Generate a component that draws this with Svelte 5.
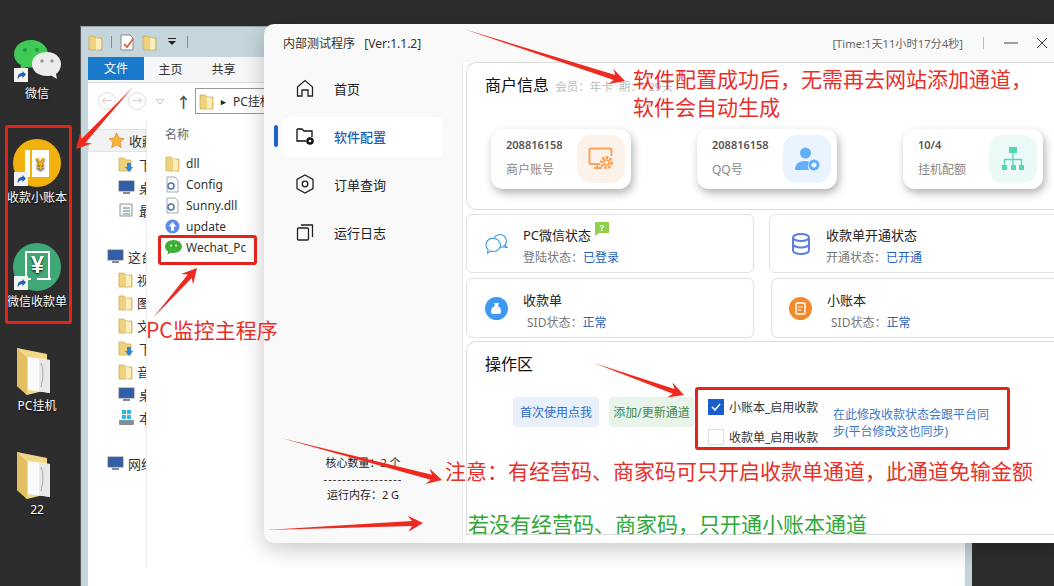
<script>
	const desktop = [
		{ name: '微信', kind: 'wechat' },
		{ name: '收款小账本', kind: 'ledger' },
		{ name: '微信收款单', kind: 'receipt' },
		{ name: 'PC挂机', kind: 'folder' },
		{ name: '22', kind: 'folder' }
	];
	const tree = [
		{ t: '收藏夹', top: true, sel: true, kind: 'star' },
		{ t: '下载', kind: 'dl' },
		{ t: '桌面', kind: 'desk' },
		{ t: '最近', kind: 'recent' },
		{ t: '这台电脑', top: true, gap: true, kind: 'pc' },
		{ t: '视频', kind: 'folder' },
		{ t: '图片', kind: 'folder' },
		{ t: '文档', kind: 'folder' },
		{ t: '下载', kind: 'dl' },
		{ t: '音乐', kind: 'folder' },
		{ t: '桌面', kind: 'desk' },
		{ t: '本地磁盘', kind: 'disk' },
		{ t: '网络', top: true, gap: true, kind: 'pc' }
	];
	const files = [
		{ n: 'dll', kind: 'folder' },
		{ n: 'Config', kind: 'config' },
		{ n: 'Sunny.dll', kind: 'dllf' },
		{ n: 'update', kind: 'update' },
		{ n: 'Wechat_Pc', kind: 'wx' }
	];
	const nav = [
		{ t: '首页', icon: 'home' },
		{ t: '软件配置', icon: 'cfg', active: true },
		{ t: '订单查询', icon: 'hex' },
		{ t: '运行日志', icon: 'copy' }
	];
	const stats = [
		{ v: '208816158', l: '商户账号', c: 'orange' },
		{ v: '208816158', l: 'QQ号', c: 'blue' },
		{ v: '10/4', l: '挂机配额', c: 'teal' }
	];
	// 标注箭头: 尾部 -> 箭尖
	const arrows = [
		[464, 29, 625, 81],
		[133, 87, 76, 149],
		[153, 318, 197, 268],
		[594, 363, 684, 395],
		[281, 438, 442, 480],
		[266, 530, 423, 523]
	];
	function arrowPts([x1, y1, x2, y2]) {
		const len = Math.hypot(x2 - x1, y2 - y1);
		const ux = (x2 - x1) / len, uy = (y2 - y1) / len;
		const nx = -uy, ny = ux;
		const hb = 15, hw = 8, sw = 2.6;
		const bx = x2 - ux * hb, by = y2 - uy * hb;
		const nb = x2 - ux * (hb - 4), mb = y2 - uy * (hb - 4);
		return [
			[x1, y1],
			[nb + nx * sw, mb + ny * sw],
			[bx + nx * hw, by + ny * hw],
			[x2, y2],
			[bx - nx * hw, by - ny * hw],
			[nb - nx * sw, mb - ny * sw]
		].map(p => p.map(v => v.toFixed(1)).join(',')).join(' ');
	}
</script>

{#snippet miniFolder()}
	<svg width="15" height="17" viewBox="0 0 15 17"><path d="M1 2h5l2 2h6v12H1z" fill="#efd27e" stroke="#c9a64f" stroke-width=".7"/><path d="M8 4l5 1v10l-5 1z" fill="#fbeebc"/></svg>
{/snippet}

{#snippet shortcut()}
	<svg class="sc" width="14" height="14" viewBox="0 0 14 14"><rect width="14" height="14" fill="#f2f2f2"/><path d="M3.500 11c0-4 2-6 5-6V3l3.500 3.500L8.500 10V8c-2 0-3.500 1-5 3z" fill="#1c62b9"/></svg>
{/snippet}

{#snippet deskIcon(kind)}
	{#if kind === 'wechat'}
		<svg width="48" height="48" viewBox="0 0 48 48"><g transform="translate(0 3)">
			<path d="M18 2C8 2 1 8.500 1 16c0 5 3 9 7 11l-1 6 6-4c2 .5 4 .5 6 .5C29 29.500 35 23 35 16S28 2 18 2z" fill="#3fc957"/>
			<circle cx="12" cy="12" r="2" fill="#1f9c37"/><circle cx="24" cy="12" r="2" fill="#1f9c37"/>
			<path d="M34 14c-9 0-15 5-15 12s6 12 15 12c2 0 3 0 4-.5l6 3.500-1-5c3-2 5-6 5-10 0-7-6-12-14-12z" fill="#ececec"/>
			<circle cx="29" cy="23" r="1.800" fill="#999"/><circle cx="39" cy="23" r="1.800" fill="#999"/>
		</g></svg>
	{:else if kind === 'ledger'}
		<svg width="48" height="48" viewBox="0 0 48 48">
			<circle cx="24" cy="24" r="24" fill="#f2b10c"/>
			<rect x="12" y="11" width="5" height="27" fill="#fff"/>
			<rect x="19" y="11" width="17" height="27" fill="#fff"/>
			<text x="27.500" y="31" text-anchor="middle" font-size="16" font-weight="700" fill="#f2b10c" font-family="Liberation Sans, sans-serif">¥</text>
		</svg>
	{:else if kind === 'receipt'}
		<svg width="48" height="48" viewBox="0 0 48 48">
			<circle cx="24" cy="24" r="24" fill="#3fa876"/>
			<path d="M13 36V9h23v27" fill="none" stroke="#fff" stroke-width="2"/>
			<text x="24.500" y="30" text-anchor="middle" font-size="23" font-weight="700" fill="#fff" font-family="Liberation Sans, sans-serif">¥</text>
			<path d="M8 36h10M24 36h14" stroke="#fff" stroke-width="2"/>
		</svg>
	{:else}
		<svg width="48" height="52" viewBox="0 0 48 52">
			<path d="M4 1l30 6v36L14 48 4 39z" fill="#f2d98a"/>
			<path d="M4 1v38l10 9V11z" fill="#e3bf62"/>
			<path d="M15 10l22 3v33l-22-3z" fill="#fafafa"/>
			<path d="M26 12l11 1v33l-11-2z" fill="#e8e8e8"/>
			<path d="M28 16q4 8 0 24" stroke="#999" fill="none" stroke-width=".8"/>
		</svg>
	{/if}
{/snippet}

{#snippet treeIcon(kind)}
	{#if kind === 'star'}
		<svg width="17" height="17" viewBox="0 0 17 17"><path d="M8.500 1l2.300 5 5.200.6-3.900 3.500 1.100 5.400-4.700-2.800-4.700 2.800 1.100-5.400L1 6.600 6.200 6z" fill="#f7b733" stroke="#d5802b" stroke-width=".7"/></svg>
	{:else if kind === 'pc' || kind === 'desk'}
		<svg width="17" height="17" viewBox="0 0 17 17"><rect x="1" y="2" width="15" height="10" fill="#2f5fa8" stroke="#667" stroke-width=".8"/><rect x="5" y="13" width="7" height="2" fill="#889"/></svg>
	{:else if kind === 'disk'}
		<svg width="17" height="17" viewBox="0 0 17 17"><rect x="4" y="1" width="4" height="4" fill="#28b5e8"/><rect x="9" y="1" width="4" height="4" fill="#28b5e8"/><rect x="4" y="6" width="4" height="4" fill="#28b5e8"/><rect x="9" y="6" width="4" height="4" fill="#28b5e8"/><rect x="1" y="11" width="15" height="5" rx="1" fill="#7f9191"/></svg>
	{:else if kind === 'recent'}
		<svg width="17" height="17" viewBox="0 0 17 17"><rect x="2" y="2" width="12" height="12" fill="#f4f4f4" stroke="#8a9aa0"/><path d="M5 6h7M5 9h7M5 12h7" stroke="#6d8a96"/></svg>
	{:else if kind === 'dl'}
		<svg width="17" height="17" viewBox="0 0 17 17"><path d="M1 2h5l2 2h5v11H1z" fill="#efd27e" stroke="#c9a64f" stroke-width=".7"/><path d="M9 7h4v4h2l-4 5-4-5h2z" fill="#2a86d8"/></svg>
	{:else}
		{@render miniFolder()}
	{/if}
{/snippet}

{#snippet fileIcon(kind)}
	{#if kind === 'folder'}
		{@render miniFolder()}
	{:else if kind === 'config' || kind === 'dllf'}
		<svg width="15" height="17" viewBox="0 0 15 17"><path d="M2 1h8l3 3v12H2z" fill="#fbfbfb" stroke="#8d9aa5" stroke-width=".8"/><circle cx="6" cy="10" r="3" fill="none" stroke="#5677a6" stroke-width="1.500"/></svg>
	{:else if kind === 'update'}
		<svg width="15" height="15" viewBox="0 0 15 15"><circle cx="7.500" cy="7.500" r="7" fill="#5a8cf0"/><path d="M7.500 3l4 4.500H9V12H6V7.500H3.500z" fill="#fff"/></svg>
	{:else}
		<svg width="17" height="15" viewBox="0 0 17 15"><path d="M8.500 0C4 0 0 2.800 0 6.500c0 2 1.200 3.800 3 5l-.5 3 3-1.700c1 .2 2 .3 3 .2 4.500 0 8.500-2.800 8.500-6.500S13 0 8.500 0z" fill="#3cb034"/><circle cx="6" cy="5.500" r="1.100" fill="#fff"/><circle cx="11" cy="5.500" r="1.100" fill="#fff"/></svg>
	{/if}
{/snippet}

{#snippet navIcon(icon)}
	{#if icon === 'home'}
		<svg width="18" height="18" viewBox="0 0 18 18" fill="none" stroke="#222" stroke-width="1.300"><path d="M1.500 8L9 1.500 16.500 8v9h-4.500v-6H6v6H1.500z"/></svg>
	{:else if icon === 'cfg'}
		<svg width="18" height="18" viewBox="0 0 18 18"><path d="M1 2h5l2 2h8v6M10 14H1V2" fill="none" stroke="#111" stroke-width="1.300"/><circle cx="14" cy="14" r="3.800" fill="#111"/><circle cx="14" cy="14" r="1.300" fill="#fff"/></svg>
	{:else if icon === 'hex'}
		<svg width="18" height="20" viewBox="0 0 18 20" fill="none" stroke="#222" stroke-width="1.300"><path d="M9 1l8 4.500v9L9 19l-8-4.500v-9z"/><circle cx="9" cy="10" r="2.800"/></svg>
	{:else}
		<svg width="18" height="18" viewBox="0 0 18 18" fill="none" stroke="#222" stroke-width="1.300"><rect x="1.500" y="5" width="11" height="12" rx="1"/><path d="M5 2h11.500v12"/></svg>
	{/if}
{/snippet}

{#snippet statIcon(c)}
	{#if c === 'orange'}
		<svg width="26" height="26" viewBox="0 0 26 26"><path d="M12 18H3a1.500 1.500 0 0 1-1.500-1.500V4A1.500 1.500 0 0 1 3 2.500h19A1.500 1.500 0 0 1 23.500 4v6" fill="none" stroke="#f7a35c" stroke-width="2"/><path d="M6 22h8M9 18v4" stroke="#f7a35c" stroke-width="2"/><circle cx="18.500" cy="16.500" r="5" fill="none" stroke="#f7a35c" stroke-width="3" stroke-dasharray="2.500 1.200"/><circle cx="18.500" cy="16.500" r="2.500" fill="none" stroke="#f7a35c" stroke-width="1.500"/></svg>
	{:else if c === 'blue'}
		<svg width="26" height="26" viewBox="0 0 26 26"><circle cx="11.500" cy="7" r="5.500" fill="#63aefb"/><path d="M1 24c0-6 4-9 10-9 2 0 3 .3 4 1-1.500 2-1.500 6 0 8z" fill="#63aefb"/><circle cx="20" cy="19" r="4" fill="none" stroke="#63aefb" stroke-width="3"/></svg>
	{:else}
		<svg width="24" height="26" viewBox="0 0 24 26" fill="#52d6b6"><rect x="8" y="1" width="8" height="6"/><rect x="1" y="19" width="5" height="5"/><rect x="10" y="19" width="5" height="5"/><rect x="18" y="19" width="5" height="5"/><path d="M12 7v12M3.500 19v-5.500h17V19" fill="none" stroke="#52d6b6" stroke-width="1.300"/></svg>
	{/if}
{/snippet}

<div class="screen">
	<div class="desktop">
		{#each desktop as d}
			<div class="dicon">
				<div class="dimg">
					{@render deskIcon(d.kind)}
					{#if d.kind !== 'folder'}{@render shortcut()}{/if}
				</div>
				<span>{d.name}</span>
			</div>
		{/each}
	</div>

	<div class="explorer">
		<div class="qbar">
			{@render miniFolder()}
			<i class="qsep"></i>
			<svg width="15" height="17" viewBox="0 0 15 17"><path d="M1 1h9l3 3v12H1z" fill="#fff" stroke="#888"/><path d="M4 10l3 3 6-8" fill="none" stroke="#dd6b45" stroke-width="2"/></svg>
			{@render miniFolder()}
			<svg class="drop" width="10" height="8" viewBox="0 0 10 8"><path d="M1 0h8v1H1zM1 3h8L5 7z" fill="#222"/></svg>
			<i class="qsep"></i>
		</div>
		<div class="inner">
			<div class="tabs">
				<span class="tab on">文件</span>
				<span class="tab">主页</span>
				<span class="tab">共享</span>
			</div>
			<div class="addr">
				<i class="circ">←</i>
				<i class="circ">→</i>
				<svg class="hist" width="8" height="5" viewBox="0 0 8 5"><path d="M0 0h8L4 5z" fill="none" stroke="#bbb"/></svg>
				<span class="up">↑</span>
				<div class="path">{@render miniFolder()}<b>▸</b><span>PC挂机</span></div>
			</div>
			<div class="panes">
				<div class="tree">
					{#each tree as it}
						<div class="trow" class:top={it.top} class:sel={it.sel} class:gap={it.gap}>
							{@render treeIcon(it.kind)}<span>{it.t}</span>
						</div>
					{/each}
				</div>
				<div class="flist">
					<div class="fhead">名称</div>
					{#each files as f}
						<div class="frow"><span class="fic">{@render fileIcon(f.kind)}</span>{f.n}</div>
					{/each}
				</div>
			</div>
		</div>
	</div>

	<div class="app">
		<header class="bar">
			<span class="title">内部测试程序&nbsp;&nbsp;&nbsp;[Ver:1.1.2]</span>
			<span class="time">[Time:1天11小时17分4秒]</span>
			<i class="vsep"></i>
			<svg width="14" height="14" viewBox="0 0 14 14"><path d="M0 7h14" stroke="#444" stroke-width="1"/></svg>
			<svg class="close" width="12" height="12" viewBox="0 0 12 12"><path d="M1 1l10 10M11 1L1 11" stroke="#444" stroke-width="1"/></svg>
		</header>
		<div class="body">
			<aside class="side">
				<nav>
					{#each nav as n}
						<div class="nitem" class:active={n.active}>
							<span class="nic">{@render navIcon(n.icon)}</span>
							<span>{n.t}</span>
						</div>
					{/each}
				</nav>
				<div class="sysinfo">
					<p>核心数量：2 个</p>
					<p class="dash">-----------------</p>
					<p>运行内存：2 G</p>
				</div>
			</aside>
			<main class="main">
				<section class="panel info">
					<h2>商户信息 <small>会员：年卡&nbsp;&nbsp;期：729天</small></h2>
					<div class="stats">
						{#each stats as s}
							<div class="stat">
								<div class="stxt"><b>{s.v}</b><span>{s.l}</span></div>
								<div class="tile {s.c}">{@render statIcon(s.c)}</div>
							</div>
						{/each}
					</div>
				</section>
				<div class="cards">
					<div class="card">
						<span class="cic">
							<svg width="23" height="21" viewBox="0 0 23 21" fill="none" stroke="#3a9ad9" stroke-width="1.100"><circle cx="15" cy="8" r="6.500"/><path d="M20 12l2 2.500-3.500-.5"/><path d="M8.500 5.500a7 6.500 0 0 1 0 13c-1 0-2-.2-2.800-.5L2.500 20l.6-3.400A6.500 6.500 0 0 1 8.500 5.500z" fill="#fff"/></svg>
						</span>
						<div class="ctxt">
							<h3>PC微信状态</h3>
							<p>登陆状态：<em>已登录</em></p>
						</div>
						<i class="help">?</i>
					</div>
					<div class="card">
						<span class="cic">
							<svg class="db" width="18" height="22" viewBox="0 0 18 22" fill="none" stroke="#5b7fdb" stroke-width="2"><ellipse cx="9" cy="4.500" rx="8" ry="3.500"/><path d="M1 4.500v13c0 2 3.500 3.500 8 3.500s8-1.500 8-3.500v-13M1 11c0 2 3.500 3.500 8 3.500s8-1.500 8-3.500"/></svg>
						</span>
						<div class="ctxt">
							<h3>收款单开通状态</h3>
							<p>开通状态：<em>已开通</em></p>
						</div>
					</div>
					<div class="card low">
						<span class="cic">
							<svg width="23" height="23" viewBox="0 0 23 23"><circle cx="11.500" cy="11.500" r="11.500" fill="#3d99f5"/><path d="M9 6h5l-1 3c2 1 3 3 3 6 0 1-1 2-2 2H8c-1 0-2-1-2-2 0-3 1-5 4-6z" fill="#fff"/></svg>
						</span>
						<div class="ctxt">
							<h3>收款单</h3>
							<p class="ind">SID状态：<em>正常</em></p>
						</div>
					</div>
					<div class="card low shift">
						<span class="cic">
							<svg width="23" height="23" viewBox="0 0 23 23"><circle cx="11.500" cy="11.500" r="11.500" fill="#f28a2b"/><rect x="7" y="6" width="9" height="11" rx="1" fill="none" stroke="#fff" stroke-width="1.500"/><path d="M9 10h5M9 13h3" stroke="#fff"/></svg>
						</span>
						<div class="ctxt">
							<h3>小账本</h3>
							<p class="ind">SID状态：<em>正常</em></p>
						</div>
					</div>
				</div>
				<section class="panel ops">
					<h2>操作区</h2>
					<div class="oprow">
						<button class="btn b1">首次使用点我</button>
						<button class="btn b2">添加/更新通道</button>
						<div class="checks">
							<label><i class="box on"><svg width="10" height="8" viewBox="0 0 10 8"><path d="M1 4l3 3 5-6" fill="none" stroke="#fff" stroke-width="1.500"/></svg></i>小账本_启用收款</label>
							<label><i class="box"></i>收款单_启用收款</label>
						</div>
						<p class="note">在此修改收款状态会跟平台同步(平台修改这也同步)</p>
					</div>
				</section>
			</main>
		</div>
	</div>

	<!-- 红色标注层 -->
	<svg class="marks" width="1054" height="586" viewBox="0 0 1054 586">
		{#each arrows as a}
			<polygon points={arrowPts(a)} fill="#ee2a20"/>
		{/each}
	</svg>
	<i class="rbox r1"></i>
	<i class="rbox r2"></i>
	<i class="rbox r3"></i>
	<p class="note-a a1">软件配置成功后，无需再去网站添加通道，<br/>软件会自动生成</p>
	<p class="note-a a2">PC监控主程序</p>
	<p class="note-a a3">注意：有经营码、商家码可只开启收款单通道，此通道免输金额</p>
	<p class="note-a a4">若没有经营码、商家码，只开通小账本通道</p>
</div>

<style>
	:global(body) {
		margin: 0;
		overflow: hidden;
		font-family: "Noto Sans", "Noto Sans CJK SC", sans-serif;
	}
	p, h2, h3 { margin: 0; font-weight: 400; }
	i, em { font-style: normal; }
	svg { flex: none; }

	.screen {
		position: relative;
		width: 1054px;
		height: 586px;
		overflow: hidden;
		background: #2d2d2d;
	}

	/* desktop icons */
	.desktop { width: 74px; padding-top: 35px; }
	.dicon {
		height: 104px;
		display: flex;
		flex-direction: column;
		align-items: center;
		color: #fff;
		font-size: 12px;
		line-height: 16px;
		text-shadow: 0 1px 2px #000;
	}
	.dimg { position: relative; width: 48px; height: 51px; }
	.sc { position: absolute; left: 1px; bottom: 4px; }

	/* explorer window */
	.explorer {
		position: absolute;
		left: 80px;
		top: 26px;
		width: 892px;
		height: 560px;
		box-sizing: border-box;
		padding: 0 7px 0 7px;
		background: #c4d5dc;
		border-left: 1px solid #555;
		border-top: 1px solid #98a4aa;
	}
	.qbar {
		height: 30px;
		display: flex;
		align-items: center;
		gap: 7px;
	}
	.qsep { width: 1px; height: 12px; background: #7f8f96; margin: 0 1px; }
	.drop { margin: 0 2px 0 3px; }
	.inner { background: #fff; height: 530px; font-size: 12px; color: #333; }
	.tabs {
		height: 26px;
		display: flex;
		background: #f5f6f7;
		border-bottom: 1px solid #dadbdc;
		box-sizing: border-box;
	}
	.tab { width: 53px; line-height: 25px; text-align: center; }
	.tab.on { width: 56px; background: #1979ca; color: #fff; height: 23px; line-height: 23px; }
	.addr {
		height: 36px;
		display: flex;
		align-items: center;
		padding-left: 10px;
		box-sizing: border-box;
	}
	.circ {
		width: 18px; height: 18px;
		box-sizing: border-box;
		border: 1px solid #ddd;
		border-radius: 50%;
		color: #ccc;
		font-size: 11px;
		line-height: 15px;
		text-align: center;
		margin-right: 12px;
		flex: none;
	}
	.hist { margin: 0 12px 0 -2px; }
	.up { font-size: 15px; color: #555; font-weight: 700; width: 14px; margin-right: 5px; flex: none; }
	.path {
		height: 24px;
		width: 110px;
		flex: none;
		border: 1px solid #999;
		display: flex;
		align-items: center;
		gap: 7px;
		padding-left: 3px;
	}
	.path b { font-size: 9px; color: #222; }
	.panes { display: flex; }
	.tree {
		width: 58px;
		padding-top: 10px;
		overflow: hidden;
		border-right: 1px solid #eee;
		height: 440px;
		flex: none;
	}
	.trow {
		height: 23px;
		display: flex;
		align-items: center;
		gap: 4px;
		padding-left: 30px;
		white-space: nowrap;
		font-size: 13px;
	}
	.trow.top { padding-left: 19px; }
	.trow.sel { background: #f2f2f2; border: 1px solid #e2e2e2; height: 21px; margin-bottom: 1px; }
	.trow.gap { margin-top: 23px; }
	.flist { padding-top: 4px; }
	.fhead { height: 24px; line-height: 24px; padding-left: 18px; color: #666; margin-bottom: 6px; font-size: 12px; }
	.frow {
		height: 21px;
		display: flex;
		align-items: center;
		padding-left: 18px;
		font-size: 12px;
		color: #333;
	}
	.fic { width: 21px; display: flex; }

	/* app window */
	.app {
		position: absolute;
		left: 264px;
		top: 24px;
		width: 800px;
		height: 519px;
		background: #f9f9f9;
		border-radius: 10px 0 0 10px;
		box-shadow: 0 6px 22px rgba(0, 0, 0, .22);
		display: flex;
		flex-direction: column;
		overflow: hidden;
		color: #111;
	}
	.bar {
		height: 38px;
		flex: none;
		display: flex;
		align-items: center;
		padding: 0 16px 0 19px;
		font-size: 12px;
		color: #333;
	}
	.title { flex: 1; }
	.time { color: #666; font-size: 11.200px; }
	.vsep { width: 1px; height: 12px; background: #bbb; margin: 0 20px; }
	.close { margin-left: 18px; }
	.body { flex: 1; display: flex; min-height: 0; }
	.side {
		width: 199px;
		flex: none;
		display: flex;
		flex-direction: column;
		border-right: 1px solid #eee;
		padding-top: 7px;
		box-sizing: border-box;
	}
	nav { display: flex; flex-direction: column; gap: 8px; padding-left: 19px; }
	.nitem {
		position: relative;
		width: 160px;
		height: 40px;
		box-sizing: border-box;
		padding-bottom: 2px;
		display: flex;
		align-items: center;
		border-radius: 6px;
		font-size: 13px;
		color: #222;
	}
	.nic { width: 51px; padding-left: 13px; box-sizing: border-box; display: flex; }
	.nitem.active { background: #fff; color: #1f5fb8; font-weight: 500; }
	.nitem.active::before {
		content: '';
		position: absolute;
		left: -9px;
		top: 8px;
		width: 4px;
		height: 22px;
		border-radius: 2px;
		background: #1a66cc;
	}
	.sysinfo {
		margin-top: auto;
		margin-bottom: 40px;
		text-align: center;
		font-size: 11px;
		line-height: 16px;
		color: #222;
	}
	.dash { letter-spacing: 1.100px; overflow: hidden; }

	.main { flex: 1; background: #fff; padding-left: 3px; display: flex; flex-direction: column; }
	.panel {
		border: 1px solid #dcdcdc;
		border-right: 0;
		background: #fff;
		box-sizing: border-box;
	}
	.panel h2 { font-size: 16px; color: #111; line-height: 22px; }
	.panel small { font-size: 11.500px; color: #bbb; margin-left: 2px; }
	.info { height: 148px; padding: 11px 0 0 18px; border-radius: 10px 0 0 10px; }
	.stats { display: flex; gap: 66px; margin: 31px 0 0 6px; }
	.stat {
		width: 140px;
		height: 60px;
		background: #fff;
		border-radius: 12px;
		box-shadow: 2px 4px 8px rgba(0, 0, 0, .3);
		display: flex;
		align-items: center;
		justify-content: space-between;
		padding: 0 6px 0 15px;
		box-sizing: border-box;
	}
	.stxt { display: flex; flex-direction: column; gap: 9px; margin-bottom: 3px; }
	.stxt b { font-size: 11px; color: #555; font-weight: 600; line-height: 16px; }
	.stxt span { font-size: 12px; color: #888; line-height: 16px; }
	.tile {
		width: 48px;
		height: 48px;
		border-radius: 14px;
		display: flex;
		align-items: center;
		justify-content: center;
	}
	.tile.orange { background: #fdf2ea; }
	.tile.blue { background: #eaf4fe; }
	.tile.teal { background: #ecfaf7; }

	.cards {
		display: grid;
		grid-template-columns: 288px 1fr;
		column-gap: 15px;
		row-gap: 5px;
		margin-top: 4px;
	}
	.card {
		position: relative;
		height: 59px;
		border: 1px solid #e2e2e2;
		border-radius: 6px;
		box-sizing: border-box;
		display: flex;
		align-items: center;
		padding: 6px 0 0 18px;
	}
	.card.low { height: 60px; }
	.card.shift { margin-left: 2px; padding-left: 17px; }
	.cic { width: 38px; flex: none; display: flex; margin-top: -6px; }
	.db { margin-left: 4px; }
	.ctxt { display: flex; flex-direction: column; gap: 5px; }
	.ctxt h3 { font-size: 13px; color: #222; line-height: 17px; }
	.ctxt p { font-size: 12px; color: #777; line-height: 17px; }
	.ctxt p.ind { padding-left: 4px; }
	.ctxt em { color: #1f62b8; }
	.help {
		position: absolute;
		left: 128px;
		top: 7px;
		width: 14px;
		height: 11px;
		background: #8fd14f;
		color: #fff;
		font-size: 9px;
		font-weight: 700;
		line-height: 11px;
		text-align: center;
	}
	.help::after {
		content: '';
		position: absolute;
		left: 0;
		bottom: -3px;
		border-top: 3px solid #8fd14f;
		border-right: 4px solid transparent;
	}
	.ops { margin-top: 3px; height: 194px; padding: 11px 0 0 18px; border-radius: 10px 0 0 0; }
	.oprow { display: flex; margin: 22px 0 0 28px; gap: 10px; align-items: flex-start; }
	.btn {
		height: 30px;
		width: 86px;
		border: 0;
		border-radius: 4px;
		font: inherit;
		font-size: 12px;
		padding: 0;
		flex: none;
	}
	.b1 { background: #e8f0fc; color: #2d6bc4; }
	.b2 { background: #e8f3ea; color: #3e8a50; width: 85px; }
	.checks {
		display: flex;
		flex-direction: column;
		gap: 14px;
		margin: 2px 0 0 4px;
		font-size: 12px;
		color: #333;
		width: 115px;
		flex: none;
	}
	label { display: flex; align-items: center; gap: 5px; white-space: nowrap; height: 16px; }
	.box {
		width: 16px;
		height: 16px;
		box-sizing: border-box;
		border: 1px solid #ddd;
		display: flex;
		align-items: center;
		justify-content: center;
		flex: none;
	}
	.box.on { background: #1a5fd0; border-color: #1a5fd0; }
	.note {
		width: 158px;
		margin-top: 9px;
		font-size: 12px;
		line-height: 17px;
		color: #3d78c8;
	}

	/* annotations */
	.marks { position: absolute; left: 0; top: 0; pointer-events: none; }
	.rbox {
		position: absolute;
		box-sizing: border-box;
		border: 3px solid #e5231b;
		border-radius: 3px;
	}
	.r1 { left: 5px; top: 125px; width: 67px; height: 199px; }
	.r2 { left: 158px; top: 235px; width: 99px; height: 30px; }
	.r3 { left: 695px; top: 387px; width: 315px; height: 63px; }
	.note-a { position: absolute; white-space: nowrap; color: #e8302a; font-family: "Noto Sans CJK SC", sans-serif; }
	.a1 { left: 633px; top: 64px; font-size: 21px; line-height: 28px; }
	.a2 { left: 146px; top: 315px; font-size: 21px; line-height: 28px; }
	.a3 { left: 445px; top: 456px; font-size: 21px; line-height: 28px; }
	.a4 { left: 468px; top: 509px; font-size: 21px; line-height: 28px; color: #2fa83a; }
</style>
